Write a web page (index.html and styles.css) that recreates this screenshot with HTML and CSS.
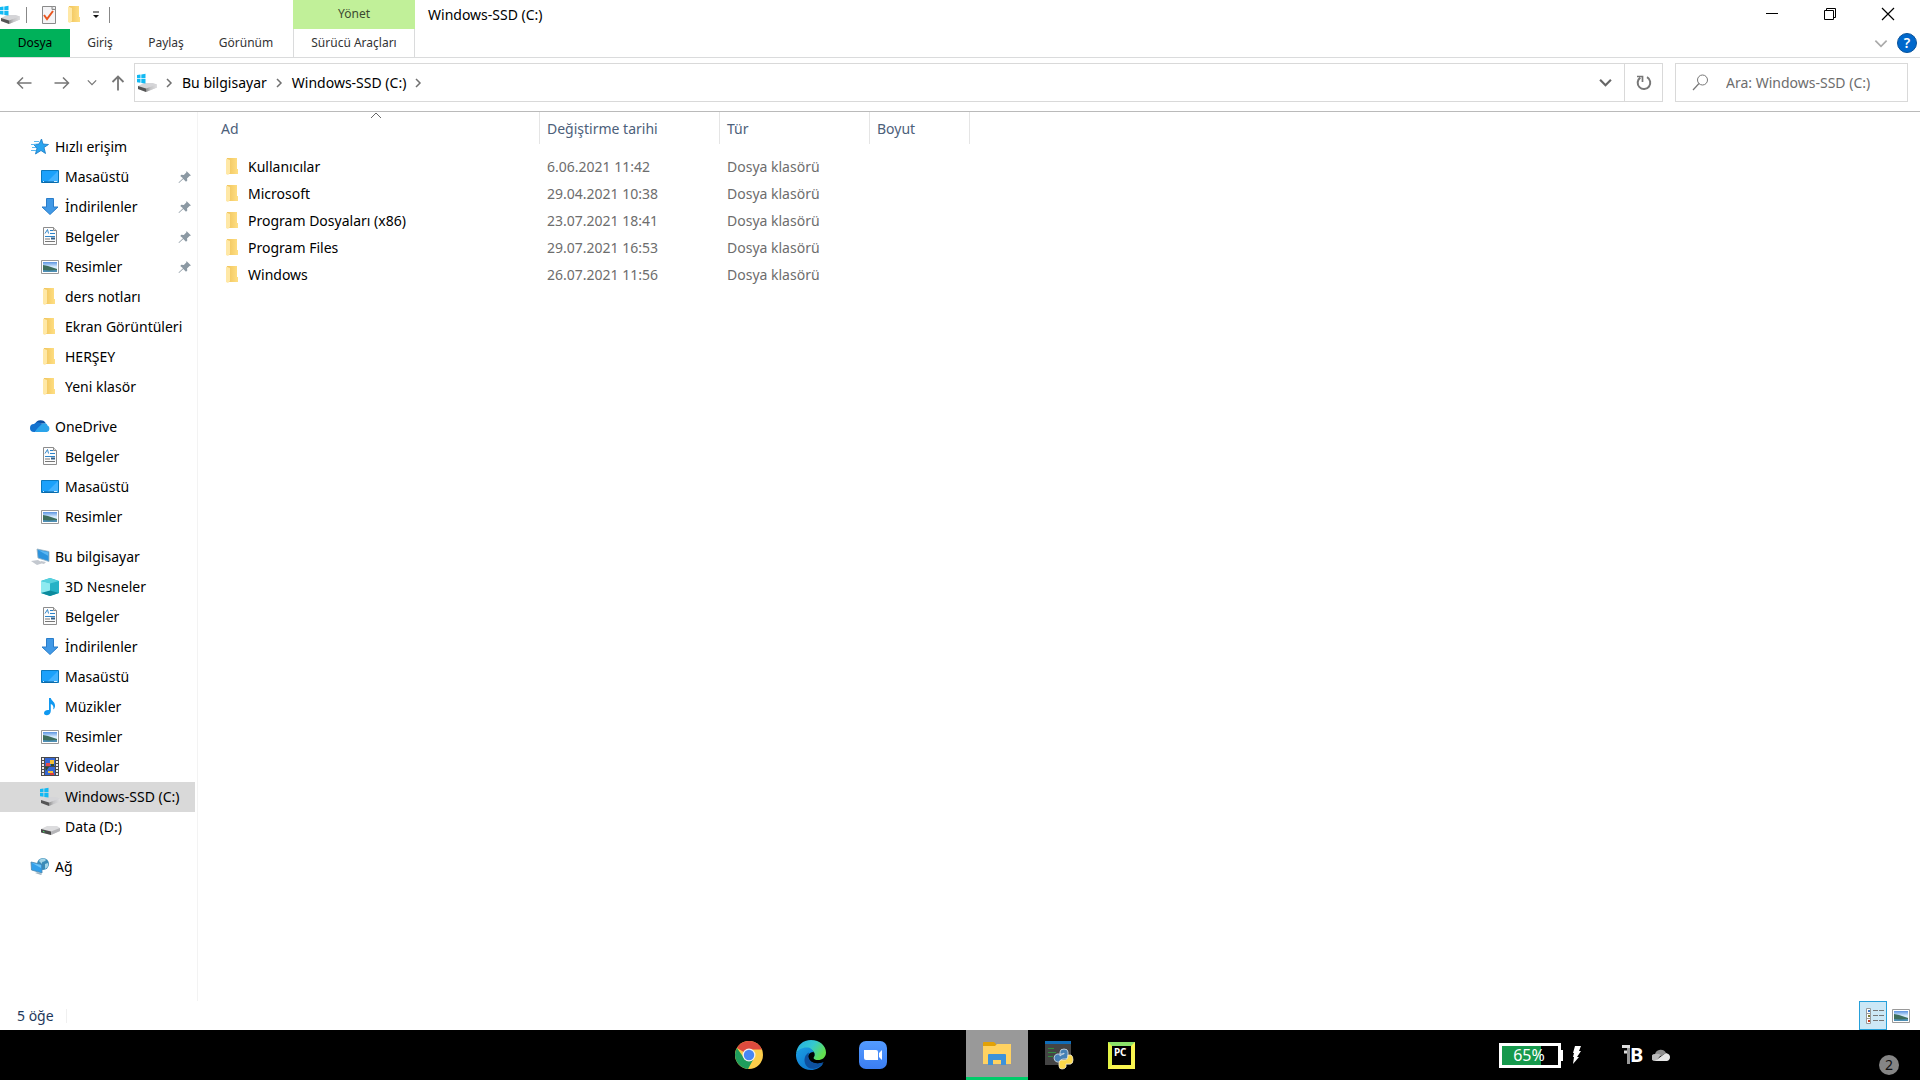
FILE: index.html
```html
<!DOCTYPE html>
<html lang="tr">
<head>
<meta charset="utf-8">
<title>Windows-SSD (C:)</title>
<link rel="stylesheet" href="styles.css">
</head>
<body>
<svg class="sprite" aria-hidden="true">
  <defs>
    <linearGradient id="g-folder" x1="0" x2="1"><stop offset="0" stop-color="#f0c45c"/><stop offset="1" stop-color="#ffdf84"/></linearGradient>
    <linearGradient id="g-drive" x1="0" x2="1"><stop offset="0" stop-color="#8e8e8e"/><stop offset=".4" stop-color="#c4c4c6"/><stop offset="1" stop-color="#dedee0"/></linearGradient>
    <linearGradient id="g-sky" x1="0" y1="0" x2="0" y2="1"><stop offset="0" stop-color="#5b93e0"/><stop offset=".5" stop-color="#dcefff"/><stop offset="1" stop-color="#b8d6ef"/></linearGradient>
    <linearGradient id="g-edge1" x1="0" y1="0" x2="1" y2=".5"><stop offset="0" stop-color="#23a9e8"/><stop offset=".55" stop-color="#35c9cf"/><stop offset="1" stop-color="#62df4e"/></linearGradient>
    <linearGradient id="g-edge2" x1="0" y1="0" x2="1" y2="1"><stop offset="0" stop-color="#1b9fe4"/><stop offset="1" stop-color="#0a6bc8"/></linearGradient>
    <linearGradient id="g-zoom" x1="0" y1="0" x2="0" y2="1"><stop offset="0" stop-color="#539bff"/><stop offset="1" stop-color="#3b7df2"/></linearGradient>
  </defs>
  <symbol id="i-folder" viewBox="0 0 20 20"><path d="M4 1h10v11h1v5H5z" fill="url(#g-folder)"/><path d="M3 1.500L7 3v13l-2 2-2-1z" fill="#ffe8a6"/></symbol>
  <symbol id="i-drive" viewBox="0 0 20 20"><path d="M1 12l6-3h10l3 2v3l-9 4-10-3z" fill="#dcdcde"/><path d="M1 12l10 2.500v3.500l-10-2.500z" fill="#4b4b4b"/><path d="M11 14.500l9-3.500v3l-9 4z" fill="#b5b5b8"/><path d="M3 14.500l1.500.4" stroke="#4ce36a"/></symbol>
  <symbol id="i-windrive" viewBox="0 0 20 20"><path d="M1 13l6-3h9l4 1.500v3l-11 4.500-8-3z" fill="#d5d5d8"/><path d="M1 13l8 2.500v3.500l-8-3z" fill="#555"/><path d="M9 15.500l11-4v3l-11 4.500z" fill="url(#g-drive)"/><path d="M0 2l3.500-.5v3.700H0zM4.300 1.400l4.200-.6v4.400H4.300zM0 6h3.500v3.700L0 9.200zM4.300 6h4.200v4.500l-4.200-.6z" fill="#12b9f3"/></symbol>
  <symbol id="i-star" viewBox="0 0 20 20"><path d="M11.500 2l1.500 5 5.500.5-4.500 3 1.500 6-4.500-3-5.500 3.500L7 11 3.500 7.500l5.500-.5z" fill="#2ba5ef" stroke="#1679c4" stroke-width=".8"/><path d="M4 4.500h5M1 7.500h5M2 10.500h4M1 13.500h5" stroke="#5cb7ee" stroke-width="1"/></symbol>
  <symbol id="i-desktop" viewBox="0 0 20 20"><path d="M1.500 3.500h17v12h-17z" fill="#1ba1fb" stroke="#0c79bd"/><path d="M18 4v11L7 15z" fill="#42b2ff"/><path d="M2 15h15" stroke="#075e9a"/><path d="M3 14.500h1M14 14.500h3" stroke="#c9ecff"/></symbol>
  <symbol id="i-down" viewBox="0 0 20 20"><path d="M6.500 1.500h7V10H18l-8 7.500L2 10h4.500z" fill="#4199e6" stroke="#2a7dca"/></symbol>
  <symbol id="i-doc" viewBox="0 0 20 20"><path d="M3.500.5h10l3 3v14h-13z" fill="#fcfcfc" stroke="#8c8c8c"/><path d="M13.500.5v3h3" fill="#ddd" stroke="#8c8c8c"/><path d="M5 6.500l2.500-4 1 4M10 3.500h3M10 6.500h5M5 9.500h10" stroke="#2f84c8" fill="none"/><path d="M5 12h5M5 14.500h10" stroke="#777"/><path d="M11 10.500h4v2h-4z" fill="#345f86"/></symbol>
  <symbol id="i-picture" viewBox="0 0 20 20"><path d="M1.500 3.500h17v13h-17z" fill="#fff" stroke="#999"/><path d="M3 5h14v10H3z" fill="url(#g-sky)"/><path d="M3 8l5 1 9 3v3H3z" fill="#3f6e5d"/><path d="M3 13l6 .5 8-.5v2H3z" fill="#4d8fb5"/></symbol>
  <symbol id="i-cloud" viewBox="0 0 20 20"><path d="M5 7a6 6 0 0 1 11-.5z" fill="#0b4fa3"/><path d="M4 15A4 4 0 0 1 4 7c4-3.500 7-1 9 1.500L5 15z" fill="#1372cf"/><path d="M12 7c2-1.500 5-1 5.500 1.500A3.500 3.500 0 0 1 17 15H5c1-3 4-5 7-8z" fill="#2ba4ea"/></symbol>
  <symbol id="i-pc" viewBox="0 0 20 20"><path d="M7 2l12 2.500v10L8 11z" fill="#2c93dd" stroke="#9ab2c1" stroke-width=".8"/><path d="M8 3l10 2.300v3.500z" fill="#5ab6f2"/><path d="M11 14l5 1-2 2-4-1zM1 14l7-1 5 3-6 2z" fill="#c3c8cf"/></symbol>
  <symbol id="i-cube" viewBox="0 0 20 20"><path d="M1 4l9-3 9 3v12l-9 3-9-3z" fill="#22b8cf"/><path d="M1 4l9 2v9l-9 1z" fill="#8feaf0"/><path d="M10 6l9-2v12l-9-1z" fill="#25b2c6"/><path d="M1 4l9-3 9 3-9 2.500z" fill="#57d1dd"/><path d="M1 16l9-2.500L19 16l-9 3z" fill="#0c8a9c"/></symbol>
  <symbol id="i-music" viewBox="0 0 20 20"><path d="M9 1h1.800c.5 3 4.800 4 4.200 8.500-.3 1.500-1 2.500-1.800 3 .8-3-.2-4.500-2.400-5.500V14c0 5-6.800 5.500-6.800 2C4 13.500 7 12.500 9 13z" fill="#1098f0"/></symbol>
  <symbol id="i-video" viewBox="0 0 20 20"><path d="M1 0h18v19H1z" fill="#4a4a4a"/><path d="M5 1h10v8H5zM5 10h10v8H5z" fill="#3567d4"/><path d="M3 1v18M17 1v18" stroke="#eee" stroke-width="2" stroke-dasharray="2 1"/><path d="M6 6h4v3H6z" fill="#e34a4a"/><path d="M10 3h4v4h-4zM8 14h5v2H8z" fill="#f4bf35"/><path d="M11 7h3v2h-3zM5 10h4l-3 4z" fill="#2d4b31"/><path d="M10 16h4v2h-4z" fill="#d83c3c"/></symbol>
  <symbol id="i-network" viewBox="0 0 20 20"><circle cx="13" cy="7" r="6" fill="#3a8cb8"/><path d="M9 4c2-3 5-3 7-1-2 3-4 0-4 4zM15 7l3-1c1 3-1 5-3 6z" fill="#a5d6e8"/><path d="M1 5l11 2.500v8.500L1.500 13z" fill="#319fea" stroke="#4b86ad" stroke-width=".8"/><path d="M2 6l9 2v3z" fill="#6cc4f8"/><path d="M5 16l6 2 1-1-4-2z" fill="#9bb3c2"/></symbol>
  <symbol id="i-pin" viewBox="0 0 14 14"><path d="M8.500 1L13 5.500l-1.500.5-2.500 2.500.3 2-1.300 1.200-2.700-2.700L1 13l-.5-.5L5 8.300 2.300 6l1-1.200 2.500.2L8.300 2.500z" fill="#8c99a3"/></symbol>
  <symbol id="i-chev-r" viewBox="0 0 8 10"><path d="M2 1l4 4-4 4" fill="none" stroke="#707070" stroke-width="1.500"/></symbol>
  <symbol id="i-chev-d" viewBox="0 0 12 8"><path d="M1 1.500l5 5 5-5" fill="none" stroke="currentColor" stroke-width="var(--w,1.500)"/></symbol>
</svg>

<div class="window">
  <header class="ribbon">
    <div class="ribbon-left">
      <div class="quick">
        <svg class="icon"><use href="#i-windrive"/></svg>
        <span class="rule rule-a"></span>
        <button class="bare" aria-label="Özellikler"><svg width="14" height="20" viewBox="0 0 14 20"><path d="M.5 1.500h13v17H.5z" fill="#f4f4f6" stroke="#8a8a8a"/><path d="M10 1.500v3h3.500" fill="#ddd" stroke="#8a8a8a"/><path d="M2 10l3 4 6-8" fill="none" stroke="#e8551f" stroke-width="2"/></svg></button>
        <button class="bare" aria-label="Yeni klasör"><svg class="icon"><use href="#i-folder"/></svg></button>
        <button class="bare more" aria-label="Hızlı Erişim Araç Çubuğunu Özelleştir"><svg width="8" height="8" viewBox="0 0 8 8"><path d="M1 1h6" stroke="#111"/><path d="M1 4h6L4 7z" fill="#111"/></svg></button>
        <span class="rule"></span>
      </div>
      <nav class="tabs">
        <button class="tab tab-file">Dosya</button>
        <button class="tab tab-home">Giriş</button>
        <button class="tab tab-share">Paylaş</button>
        <button class="tab tab-view">Görünüm</button>
      </nav>
    </div>
    <div class="context">
      <div class="context-name">Yönet</div>
      <button class="tab tab-tools">Sürücü Araçları</button>
    </div>
    <h1 class="title">Windows-SSD (C:)</h1>
    <div class="ribbon-right">
      <div class="controls">
        <button class="bare control" aria-label="Simge durumuna küçült"><svg width="14" height="14"><path d="M1 6.500h12" stroke="#000"/></svg></button>
        <button class="bare control" aria-label="Önceki boyut"><svg width="14" height="14"><path d="M1.500 3.500h9v9h-9zM3.500 3.500v-2h9v9h-2" fill="none" stroke="#000"/></svg></button>
        <button class="bare control" aria-label="Kapat"><svg width="14" height="14"><path d="M1 1l12 12M13 1L1 13" stroke="#000" stroke-width="1.200"/></svg></button>
      </div>
      <div class="help-row">
        <button class="bare fold" aria-label="Şeridi genişlet"><svg width="14" height="9"><use href="#i-chev-d"/></svg></button>
        <button class="help" aria-label="Yardım">?</button>
      </div>
    </div>
  </header>

  <div class="address-row">
    <div class="arrows">
      <button class="bare" aria-label="Geri"><svg width="16" height="14" viewBox="0 0 16 14"><path d="M15.500 7H1.500M7 1.500L1.500 7 7 12.500" fill="none" stroke="#777" stroke-width="1.500"/></svg></button>
      <button class="bare" aria-label="İleri"><svg width="16" height="14" viewBox="0 0 16 14"><path d="M.5 7h14M9 1.500L14.500 7 9 12.500" fill="none" stroke="#777" stroke-width="1.500"/></svg></button>
      <button class="bare recent" aria-label="Son konumlar"><svg width="10" height="7"><use href="#i-chev-d"/></svg></button>
      <button class="bare" aria-label="Yukarı"><svg width="14" height="16" viewBox="0 0 14 16"><path d="M7 15.500V1.500M1.500 7L7 1.500 12.500 7" fill="none" stroke="#777" stroke-width="1.800"/></svg></button>
    </div>
    <div class="path">
      <svg class="icon"><use href="#i-windrive"/></svg>
      <svg class="sep"><use href="#i-chev-r"/></svg>
      <a href="#bu-bilgisayar">Bu bilgisayar</a>
      <svg class="sep"><use href="#i-chev-r"/></svg>
      <a href="#windows-ssd">Windows-SSD (C:)</a>
      <svg class="sep"><use href="#i-chev-r"/></svg>
      <button class="bare path-drop" aria-label="Önceki konumlar"><svg width="13" height="9"><use href="#i-chev-d"/></svg></button>
      <button class="bare refresh" aria-label="Yenile"><svg width="16" height="16" viewBox="0 0 16 16"><path d="M11 2.200A6.300 6.300 0 1 1 4.300 2.600" fill="none" stroke="#777" stroke-width="2"/><path d="M1 1.500h5.500V7" fill="none" stroke="#777" stroke-width="1.700"/></svg></button>
    </div>
    <label class="search">
      <svg width="17" height="17" viewBox="0 0 17 17"><circle cx="10.500" cy="6" r="5" fill="none" stroke="#777"/><path d="M7 9.500L1 16" stroke="#777" stroke-width="1.200"/></svg>
      <input type="search" placeholder="Ara: Windows-SSD (C:)" aria-label="Ara: Windows-SSD (C:)">
    </label>
  </div>

  <div class="content">
    <nav class="tree">
      <ul>
        <li><a class="root" href="#hizli"><svg class="icon"><use href="#i-star"/></svg>Hızlı erişim</a></li>
        <li><a href="#m1"><svg class="icon"><use href="#i-desktop"/></svg>Masaüstü<svg class="pin"><use href="#i-pin"/></svg></a></li>
        <li><a href="#i1"><svg class="icon"><use href="#i-down"/></svg>İndirilenler<svg class="pin"><use href="#i-pin"/></svg></a></li>
        <li><a href="#b1"><svg class="icon"><use href="#i-doc"/></svg>Belgeler<svg class="pin"><use href="#i-pin"/></svg></a></li>
        <li><a href="#r1"><svg class="icon"><use href="#i-picture"/></svg>Resimler<svg class="pin"><use href="#i-pin"/></svg></a></li>
        <li><a href="#dn"><svg class="icon"><use href="#i-folder"/></svg>ders notları</a></li>
        <li><a href="#eg"><svg class="icon"><use href="#i-folder"/></svg>Ekran Görüntüleri</a></li>
        <li><a href="#he"><svg class="icon"><use href="#i-folder"/></svg>HERŞEY</a></li>
        <li><a href="#yk"><svg class="icon"><use href="#i-folder"/></svg>Yeni klasör</a></li>
      </ul>
      <ul>
        <li><a class="root" href="#onedrive"><svg class="icon"><use href="#i-cloud"/></svg>OneDrive</a></li>
        <li><a href="#b2"><svg class="icon"><use href="#i-doc"/></svg>Belgeler</a></li>
        <li><a href="#m2"><svg class="icon"><use href="#i-desktop"/></svg>Masaüstü</a></li>
        <li><a href="#r2"><svg class="icon"><use href="#i-picture"/></svg>Resimler</a></li>
      </ul>
      <ul>
        <li><a class="root" href="#bu-bilgisayar"><svg class="icon"><use href="#i-pc"/></svg>Bu bilgisayar</a></li>
        <li><a href="#3d"><svg class="icon"><use href="#i-cube"/></svg>3D Nesneler</a></li>
        <li><a href="#b3"><svg class="icon"><use href="#i-doc"/></svg>Belgeler</a></li>
        <li><a href="#i3"><svg class="icon"><use href="#i-down"/></svg>İndirilenler</a></li>
        <li><a href="#m3"><svg class="icon"><use href="#i-desktop"/></svg>Masaüstü</a></li>
        <li><a href="#mz"><svg class="icon"><use href="#i-music"/></svg>Müzikler</a></li>
        <li><a href="#r3"><svg class="icon"><use href="#i-picture"/></svg>Resimler</a></li>
        <li><a href="#vi"><svg class="icon"><use href="#i-video"/></svg>Videolar</a></li>
        <li><a class="selected" href="#windows-ssd"><svg class="icon"><use href="#i-windrive"/></svg>Windows-SSD (C:)</a></li>
        <li><a href="#data"><svg class="icon"><use href="#i-drive"/></svg>Data (D:)</a></li>
      </ul>
      <ul>
        <li><a class="root" href="#ag"><svg class="icon"><use href="#i-network"/></svg>Ağ</a></li>
      </ul>
    </nav>

    <main class="files">
      <table>
        <colgroup><col class="c-name"><col class="c-date"><col class="c-type"><col class="c-size"></colgroup>
        <thead>
          <tr><th class="sorted">Ad<svg class="caret" width="12" height="7" viewBox="0 0 12 7"><path d="M1 6l5-5 5 5" fill="none" stroke="#666"/></svg></th><th>Değiştirme tarihi</th><th>Tür</th><th>Boyut</th></tr>
        </thead>
        <tbody>
          <tr><td><a href="#f1"><svg class="icon"><use href="#i-folder"/></svg>Kullanıcılar</a></td><td>6.06.2021 11:42</td><td>Dosya klasörü</td><td></td></tr>
          <tr><td><a href="#f2"><svg class="icon"><use href="#i-folder"/></svg>Microsoft</a></td><td>29.04.2021 10:38</td><td>Dosya klasörü</td><td></td></tr>
          <tr><td><a href="#f3"><svg class="icon"><use href="#i-folder"/></svg>Program Dosyaları (x86)</a></td><td>23.07.2021 18:41</td><td>Dosya klasörü</td><td></td></tr>
          <tr><td><a href="#f4"><svg class="icon"><use href="#i-folder"/></svg>Program Files</a></td><td>29.07.2021 16:53</td><td>Dosya klasörü</td><td></td></tr>
          <tr><td><a href="#f5"><svg class="icon"><use href="#i-folder"/></svg>Windows</a></td><td>26.07.2021 11:56</td><td>Dosya klasörü</td><td></td></tr>
        </tbody>
      </table>
    </main>
  </div>

  <footer class="status">
    <span class="count">5 öğe</span>
    <div class="views">
      <button class="view on" aria-label="Ayrıntılar"><svg width="18" height="16" viewBox="0 0 18 16"><path d="M.5.500h4v15h-4zM.5 5.500h4M.5 10.500h4" fill="#fff" stroke="#999"/><path d="M2 2h2v2H2z" fill="#3c78c8"/><path d="M2 7h2v2H2z" fill="#7a7a30"/><path d="M2 12h2v2H2z" fill="#c83c20"/><path d="M7 2.500h5M13 2.500h5M7 7.500h5M13 7.500h5M7 12.500h5M13 12.500h5" stroke="#777"/></svg></button>
      <button class="view" aria-label="Büyük simgeler"><svg class="icon"><use href="#i-picture"/></svg></button>
    </div>
  </footer>
</div>

<div class="taskbar">
  <div class="apps">
    <button class="app" aria-label="Chrome"><svg width="30" height="30" viewBox="0 0 30 30"><circle cx="15" cy="15" r="14" fill="#fccd4a"/><path d="M15 15L2.900 8A14 14 0 0 1 28 9.500H15z" fill="#dd4b3e"/><path d="M2.900 8A14 14 0 0 0 14 29l6-11-10 0z" fill="#1f9d5c"/><circle cx="15" cy="15" r="6.500" fill="#f1f1f1"/><circle cx="15" cy="15" r="5.200" fill="#4886f4"/></svg></button>
    <button class="app" aria-label="Edge"><svg width="30" height="30" viewBox="0 0 30 30"><path d="M0 14C1 5 7 0 15 0c9 0 15 6 15 12.500 0 5-4 7.500-8 7.500-4.500 0-5-1.500-4-3 2-3 0-7-6-8C7 8 2 10 0 14z" fill="url(#g-edge1)"/><path d="M0 14C2 9 7 7 12 7.500c4 .5 6 4 6.500 7.500-1-3-6-3-6.500 2 0 6 7 8 15 6.500C25 27.500 20 30 15 30 6 30-.5 23 0 14z" fill="url(#g-edge2)"/><path d="M13 12.500c-2 7 3 11.500 11 10.500l4-1.500c-2 3.500-5 6-9 7C11 30 7 23 9 17c.8-2 2-3.500 4-4.500z" fill="#0d509f"/><path d="M17.500 12c2 3-1.500 4-.5 6 1.500 3 7 3 12 1l-1 3c-5 2-11 1.500-14-2-2.500-3-1.500-8 3.500-8z" fill="#000"/></svg></button>
    <button class="app" aria-label="Zoom"><svg width="30" height="30" viewBox="0 0 30 30"><rect x="1" y="1" width="28" height="28" rx="7" fill="url(#g-zoom)"/><path d="M6 10h12q2 0 2 2v8H8q-2 0-2-2zM21 13l3-3v10l-3-3z" fill="#fff"/></svg></button>
    <span class="app"></span>
    <button class="app active" aria-label="Dosya Gezgini"><svg width="30" height="30" viewBox="0 0 30 30"><path d="M1 3q0-1 1-1h10l2 2v3H1z" fill="#e2a106"/><path d="M1 6h12l2-2h14v20H1z" fill="#ffd261"/><path d="M6 25V15q0-1 1-1h16q1 0 1 1v10h-5v-5h-8v5z" fill="#3d92da"/></svg></button>
    <button class="app" aria-label="Python"><svg width="30" height="30" viewBox="0 0 30 30"><path d="M1 1h26v24H1z" fill="#444"/><path d="M1 1h26v3H1z" fill="#0f6cb8"/><path d="M4 8.500h6M4 12.500h8M4 16.500h5" stroke="#328d3e"/><path d="M16 16V12q0-3 4-3t4 3v5q0 2-3 2h-2q-3 0-3 3H13q-3-1-3-4t3-4h7v-1z" fill="#4580b5" stroke="#d9e2ea" stroke-width=".8"/><path d="M24 15h3q2 1 2 5t-3 4h-4v3q-1 2-4 2t-3-3v-3q0-3 3-3h3q3 0 3-5z" fill="#fbd84b" stroke="#f0ead2" stroke-width=".8"/></svg></button>
    <button class="app" aria-label="PyCharm"><span class="pc">PC</span></button>
  </div>
  <div class="tray">
    <div class="battery">65%</div>
    <svg class="bolt" width="10" height="20" viewBox="0 0 10 20"><path d="M3 1h6L7 6h2l-4 6h2l-6 7 1-7H1l1-4H1z" fill="#fff"/></svg>
    <div class="tb"><svg width="8" height="20" viewBox="0 0 8 20"><path d="M0 1.500h8M2 7h4" stroke="#ddd" stroke-width="3"/><path d="M6.500 3v16" stroke="#999" stroke-width="3"/></svg><b>B</b></div>
    <svg class="sky" width="18" height="12" viewBox="0 0 18 12"><path d="M3 5a6 6 0 0 1 11-1l-5 3z" fill="#8f8f8f"/><path d="M3 12a3.500 3.500 0 0 1 0-7q3-1 6 1l-5 6z" fill="#bababa"/><path d="M3 12l8-6 3-2q4 1 4 4t-3 4z" fill="#e6e6e6"/></svg>
    <button class="note" aria-label="2 bildirim">2</button>
  </div>
</div>
</body>
</html>
```
FILE: styles.css
```css
* { box-sizing: border-box; }

body {
  margin: 0;
  min-height: 100vh;
  display: flex;
  flex-direction: column;
  background: #fff;
  color: #000;
  font: 14px/20px "Noto Sans", "Open Sans", sans-serif;
}

button, input { font: inherit; color: inherit; }
button { margin: 0; padding: 0; border: 0; background: none; }
a { color: inherit; text-decoration: none; }
ul { margin: 0; padding: 0; list-style: none; }
svg { display: block; flex: none; }

.sprite { position: absolute; width: 0; height: 0; }
.icon { width: 20px; height: 20px; }
.bare { display: flex; align-items: center; justify-content: center; }

.window { flex: 1; display: flex; flex-direction: column; }

/* ribbon */
.ribbon { display: flex; height: 58px; border-bottom: 1px solid #dadbdc; }
.ribbon-left { width: 293px; }
.quick { display: flex; align-items: center; height: 29px; gap: 9px; }
.rule { width: 1px; height: 16px; background: #888; }
.rule-a { margin: 0 6px 0 -3px; }
.more { margin-left: -2px; }
.tabs { display: flex; }
.tab { height: 28px; font-size: 12px; color: #333; }
.tab-file { width: 70px; background: #00b15a; color: #000; }
.tab-home { width: 60px; }
.tab-share { width: 72px; }
.tab-view { width: 88px; }
.context { width: 122px; text-align: center; }
.context-name { height: 29px; line-height: 27px; font-size: 12px; background: #c1f099; color: #3c4a30; }
.tab-tools { width: 100%; border: solid #dadbdc; border-width: 0 1px; }
.title { margin: 5px 0 0 13px; font-size: 14px; font-weight: 400; }
.ribbon-right { margin-left: auto; }
.controls { display: flex; padding-right: 3px; }
.control { width: 58px; height: 28px; }
.help-row { display: flex; align-items: center; justify-content: flex-end; gap: 9px; height: 30px; padding-right: 3px; }
.fold { color: #aaa; }
.help { width: 20px; height: 20px; border: 1px solid #08529a; border-radius: 50%; background: #0068cc; color: #fff; font-weight: 600; line-height: 18px; }

/* address bar */
.address-row { display: flex; height: 54px; padding: 5px 12px 0 0; border-bottom: 1px solid #bababa; }
.arrows { display: flex; align-items: center; width: 134px; height: 39px; padding-left: 16px; }
.arrows button { margin-right: 22px; }
.arrows button:nth-child(2) { margin-right: 17px; }
.arrows .recent { color: #777; margin-right: 14px; }
.arrows button:last-child { margin-right: 0; }
.path { flex: 1; display: flex; align-items: center; height: 39px; padding-left: 2px; border: 1px solid #d9d9d9; }
.sep { width: 8px; height: 10px; margin: 0 9px 0 8px; }
.path-drop { margin-left: auto; width: 37px; color: #666; --w: 2; }
.refresh { width: 38px; height: 37px; border-left: 1px solid #d9d9d9; }
.search { display: flex; align-items: center; width: 233px; height: 39px; margin-left: 12px; padding-left: 16px; border: 1px solid #d9d9d9; }
.search input { flex: 1; min-width: 0; margin-left: 17px; padding: 0; border: 0; outline: 0; background: none; }
.search input::placeholder { color: #6d6d6d; opacity: 1; }

/* folder tree */
.content { flex: 1; display: flex; }
.tree { width: 198px; padding-top: 20px; border-right: 1px solid #f3f3f3; }
.tree ul { margin-bottom: 10px; }
.tree a { display: flex; align-items: center; gap: 5px; width: 195px; height: 30px; padding-left: 40px; white-space: nowrap; }
.tree .root { padding-left: 30px; }
.tree .selected { background: #d9d9d9; }
.pin { width: 14px; height: 14px; margin: 0 3px 0 auto; }

/* file list */
.files { flex: 1; padding-left: 15px; }
table { table-layout: fixed; width: 757px; border-collapse: separate; border-spacing: 0; color: #6d6d6d; }
.c-name { width: 327px; }
.c-date { width: 180px; }
.c-type { width: 150px; }
.c-size { width: 100px; }
th { height: 32px; padding: 1px 0 0 7px; border-right: 1px solid #e5e5e5; text-align: left; font-weight: 400; color: #4c607a; }
.sorted { position: relative; padding-left: 8px; }
.caret { position: absolute; top: 0; left: 50%; margin-left: -6px; }
tbody::before { content: ""; display: block; height: 9px; }
td { height: 27px; padding: 0 0 0 7px; }
td a { display: flex; align-items: center; gap: 5px; padding-left: 3px; color: #000; }

/* status bar */
.status { display: flex; align-items: center; justify-content: space-between; height: 29px; padding-left: 17px; color: #1e395b; }
.count { padding-right: 12px; border-right: 1px solid #f0f0f0; line-height: 14px; }
.views { display: flex; padding-right: 5px; }
.view { display: flex; align-items: center; justify-content: center; width: 28px; height: 29px; border: 1px solid transparent; }
.view.on { padding-left: 3px; border-color: #26a0da; background: #cce8f6; }

/* taskbar */
.taskbar { display: flex; height: 50px; background: #000; color: #fff; }
.apps { display: flex; margin: 0 auto 0 37%; padding-left: 8px; }
.app { display: flex; align-items: center; justify-content: center; width: 62px; height: 50px; }
.app.active { background: #999; border-bottom: 3px solid #00cc6a; padding-top: 3px; }
.pc { width: 27px; height: 27px; padding-left: 2px; border: 4px solid #e8f53f; border-color: #8be36a #fbf650 #fbf650 #e2f245; background: #000; color: #fff; font-size: 10px; font-weight: 700; line-height: 12px; text-align: left; }
.tray { display: flex; align-items: center; width: 421px; flex: none; }
.battery { position: relative; width: 62px; height: 25px; padding-right: 2px; border: 3px solid #fff; background: linear-gradient(90deg, #16994c 70%, #000 70%); font-size: 16px; text-align: center; line-height: 19px; }
.battery::after { content: ""; position: absolute; right: -5px; top: 4px; width: 2px; height: 11px; background: #fff; }
.bolt { margin-left: 11px; }
.tb { display: flex; align-items: center; margin-left: 40px; font-size: 20px; }
.sky { margin-left: 9px; }
.note { width: 20px; height: 20px; margin: 20px 21px 0 auto; border-radius: 50%; background: #858585; color: #111; font-size: 14px; line-height: 20px; }
```
